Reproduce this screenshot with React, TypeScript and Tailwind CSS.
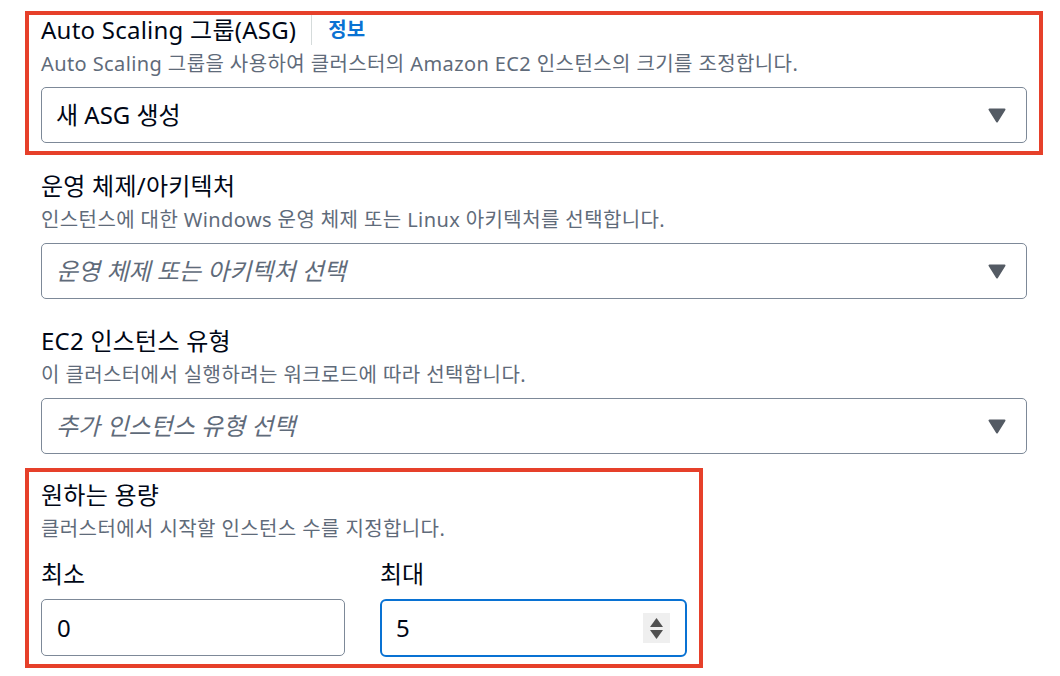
import React from "react";

const font = { fontFamily: '"Noto Sans", "Noto Sans CJK KR", sans-serif' };

function Caret() {
  return (
    <svg width="18" height="15" viewBox="0 0 18 15" className="shrink-0">
      <path d="M1.5 1.5 H16.5 L9 13.5 Z" fill="#545b64" stroke="#545b64" strokeWidth="2" strokeLinejoin="round" />
    </svg>
  );
}

function Select({ value, placeholder }: { value?: string; placeholder?: string }) {
  return (
    <div className="flex h-[56px] items-center justify-between rounded-[5px] border border-[#7d8998] bg-white pl-[14px] pr-[20px]">
      {value ? (
        <span className="text-[24px] text-[#000716]">{value}</span>
      ) : (
        <span className="text-[24px] italic text-[#5f6b7a]">{placeholder}</span>
      )}
      <Caret />
    </div>
  );
}

function Field({
  title,
  desc,
  info,
  children,
}: {
  title: string;
  desc: string;
  info?: boolean;
  children: React.ReactNode;
}) {
  return (
    <div>
      <div className="flex items-center leading-[30px]">
        <span className="text-[24px] tracking-[0.01em] text-[#000716]">{title}</span>
        {info && (
          <>
            <span className="ml-[15px] mr-[16px] h-[30px] w-px bg-[#d5dbdb]" />
            <span className="text-[20px] font-bold text-[#0972d3]">정보</span>
          </>
        )}
      </div>
      <div className="mt-[6px] text-[20px] leading-[26px] tracking-[0.02em] text-[#5f6b7a]">{desc}</div>
      <div className="mt-[10px]">{children}</div>
    </div>
  );
}

export default function App() {
  return (
    <div className="min-h-screen bg-white pl-[25px] pt-[11px]" style={font}>
      <div className="w-[1018px]">
        <div className="border-4 border-[#e6402a] px-3 pb-2">
          <Field
            title="Auto Scaling 그룹(ASG)"
            desc="Auto Scaling 그룹을 사용하여 클러스터의 Amazon EC2 인스턴스의 크기를 조정합니다."
            info
          >
            <Select value="새 ASG 생성" />
          </Field>
        </div>

        <div className="mt-[16px] px-4">
          <Field title="운영 체제/아키텍처" desc="인스턴스에 대한 Windows 운영 체제 또는 Linux 아키텍처를 선택합니다.">
            <Select placeholder="운영 체제 또는 아키텍처 선택" />
          </Field>
        </div>

        <div className="mt-[27px] px-4">
          <Field title="EC2 인스턴스 유형" desc="이 클러스터에서 실행하려는 워크로드에 따라 선택합니다.">
            <Select placeholder="추가 인스턴스 유형 선택" />
          </Field>
        </div>

        <div className="mt-[14px] w-[678px] border-4 border-[#e6402a] px-3 pb-[7px] pt-2">
          <div className="text-[24px] leading-[30px] tracking-[0.01em] text-[#000716]">원하는 용량</div>
          <div className="mt-[6px] text-[20px] leading-[26px] tracking-[0.02em] text-[#5f6b7a]">
            클러스터에서 시작할 인스턴스 수를 지정합니다.
          </div>
          <div className="mt-[17px] grid grid-cols-[304px_1fr] gap-x-[35px]">
            <div>
              <div className="text-[24px] leading-[30px] text-[#000716]">최소</div>
              <div className="mt-[10px] flex h-[57px] items-center rounded-[5px] border border-[#7d8998] pl-[15px] text-[24px] text-[#000716]">
                0
              </div>
            </div>
            <div>
              <div className="text-[24px] leading-[30px] text-[#000716]">최대</div>
              <div className="mt-[10px] flex h-[58px] items-center justify-between rounded-[6px] border-2 border-[#0972d3] pl-[14px] pr-[15px] text-[24px] text-[#000716]">
                <span>5</span>
                <span className="flex h-[30px] w-[27px] flex-col items-center justify-center gap-[3px] bg-[#efefef]">
                  <svg width="13" height="9" viewBox="0 0 13 9">
                    <path d="M6.5 0 L13 9 H0 Z" fill="#505050" />
                  </svg>
                  <svg width="13" height="9" viewBox="0 0 13 9">
                    <path d="M0 0 H13 L6.5 9 Z" fill="#505050" />
                  </svg>
                </span>
              </div>
            </div>
          </div>
        </div>
      </div>
    </div>
  );
}
